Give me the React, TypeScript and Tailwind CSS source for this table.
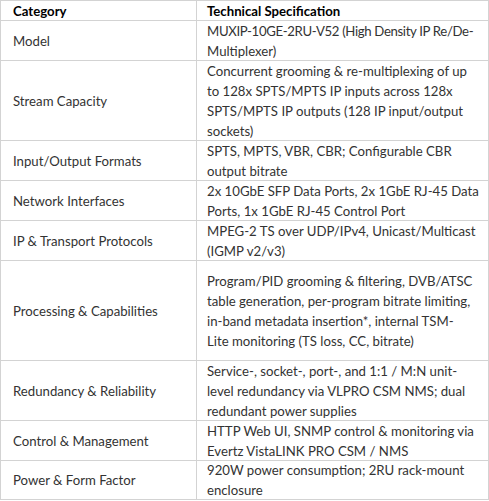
const rows: { cat: string; spec: string[]; h: string }[] = [
  { cat: "Model", spec: ["MUXIP-10GE-2RU-V52 (High Density IP Re/De-", "Multiplexer)"], h: "h-[40px]" },
  {
    cat: "Stream Capacity",
    spec: [
      "Concurrent grooming & re-multiplexing of up",
      "to 128x SPTS/MPTS IP inputs across 128x",
      "SPTS/MPTS IP outputs (128 IP input/output",
      "sockets)",
    ],
    h: "h-[80px]",
  },
  { cat: "Input/Output Formats", spec: ["SPTS, MPTS, VBR, CBR; Configurable CBR", "output bitrate"], h: "h-[40px]" },
  {
    cat: "Network Interfaces",
    spec: ["2x 10GbE SFP Data Ports, 2x 1GbE RJ-45 Data", "Ports, 1x 1GbE RJ-45 Control Port"],
    h: "h-[40px]",
  },
  { cat: "IP & Transport Protocols", spec: ["MPEG-2 TS over UDP/IPv4, Unicast/Multicast", "(IGMP v2/v3)"], h: "h-[40px]" },
  {
    cat: "Processing & Capabilities",
    spec: [
      "Program/PID grooming & filtering, DVB/ATSC",
      "table generation, per-program bitrate limiting,",
      "in-band metadata insertion*, internal TSM-",
      "Lite monitoring (TS loss, CC, bitrate)",
    ],
    h: "h-[100px]",
  },
  {
    cat: "Redundancy & Reliability",
    spec: [
      "Service-, socket-, port-, and 1:1 / M:N unit-",
      "level redundancy via VLPRO CSM NMS; dual",
      "redundant power supplies",
    ],
    h: "h-[60px]",
  },
  {
    cat: "Control & Management",
    spec: ["HTTP Web UI, SNMP control & monitoring via", "Evertz VistaLINK PRO CSM / NMS"],
    h: "h-[40px]",
  },
  { cat: "Power & Form Factor", spec: ["920W power consumption; 2RU rack-mount", "enclosure"], h: "h-[39px]" },
];

export default function App() {
  return (
    <div className="w-[489px] h-[501px] bg-white font-['Lato',sans-serif] text-[13.2px] leading-[20px] text-[#333]">
      <div className="border-t border-l border-[#d3d3d3]">
        <div className="flex h-[20px]">
          <div className="w-[196px] shrink-0 border-r border-b border-[#d3d3d3] pl-[12px] font-bold text-black flex items-center">
            Category
          </div>
          <div className="flex-1 min-w-0 border-r border-b border-[#d3d3d3] pl-[10px] font-bold text-black flex items-center">
            Technical Specification
          </div>
        </div>
        {rows.map((r) => (
          <div key={r.cat} className={`flex ${r.h}`}>
            <div className="w-[196px] shrink-0 border-r border-b border-[#d3d3d3] pl-[12px] flex items-center whitespace-nowrap">
              {r.cat}
            </div>
            <div className="flex-1 min-w-0 overflow-hidden border-r border-b border-[#d3d3d3] pl-[10px] flex flex-col justify-center whitespace-nowrap">
              {r.spec.map((l) => (
                <div key={l} className={l.startsWith("MUXIP") ? "tracking-[-0.35px]" : ""}>
                  {l}
                </div>
              ))}
            </div>
          </div>
        ))}
      </div>
    </div>
  );
}
